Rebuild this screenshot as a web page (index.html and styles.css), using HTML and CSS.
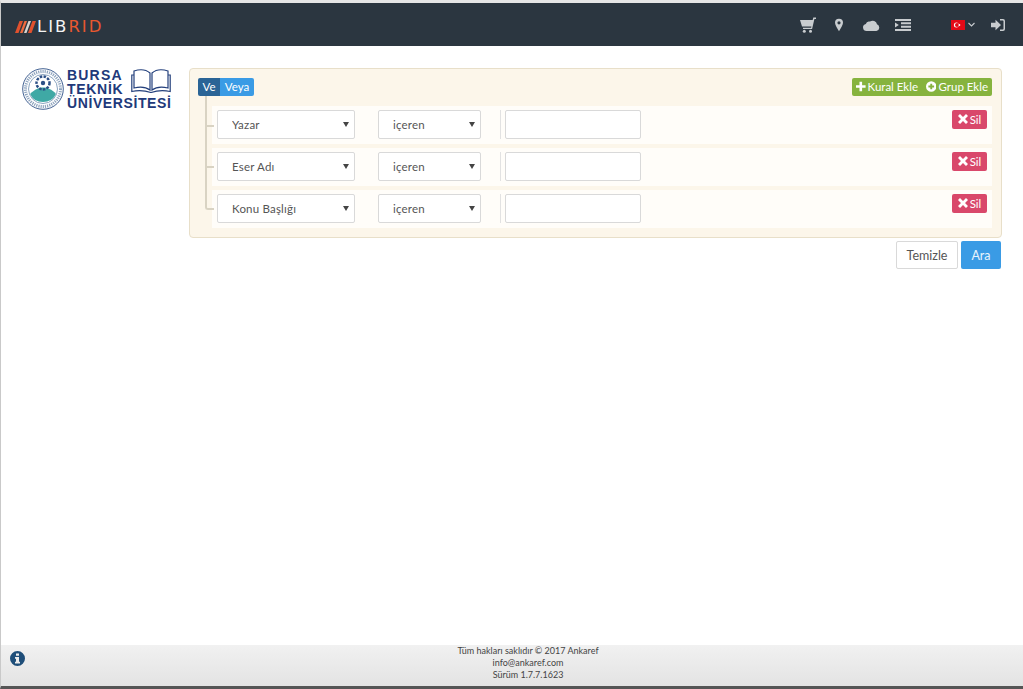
FILE: index.html
```html
<!DOCTYPE html>
<html lang="tr">
<head>
    <meta charset="UTF-8">
    <meta name="viewport" content="width=device-width, initial-scale=1.0">
    <title>Libris - Arama</title>
    <link rel="stylesheet" href="styles.css">
</head>
<body>
    <header class="navbar">
        <div class="brand">
            <svg class="brand-mark" width="21" height="12" viewBox="0 0 21 12">
                <path d="M4.500 0H8L3.500 12H0z" fill="#e0512e"/>
                <path d="M9.500 0H12L7.500 12H5z" fill="#ee6a3f"/>
                <path d="M13.500 0H16l-4.500 12H9z" fill="#d8d4cf"/>
                <path d="M17.500 0H21l-4.500 12H13z" fill="#e0512e"/>
            </svg>
            <span class="brand-lib">LIB</span><span class="brand-rid">RID</span>
        </div>
        <nav class="nav-icons">
            <svg class="nav-icon cart" width="16" height="16" viewBox="0 0 16 16"><path d="M0 3h12.700l.6-2.400H16v1.300h-1.600l-2.300 10H3v-1.200h8.100l.3-1.300H2z"/><circle cx="4.300" cy="14.300" r="1.500"/><circle cx="10.500" cy="14.300" r="1.500"/></svg>
            <svg class="nav-icon pin" width="8" height="14" viewBox="0 0 9 14"><path fill-rule="evenodd" d="M4.500 0A4.500 4.500 0 0 1 9 4.500c0 2.400-2.600 6.600-4.500 9.500C2.600 11.100 0 6.900 0 4.500A4.500 4.500 0 0 1 4.500 0zm0 2.700a1.800 1.800 0 1 0 0 3.600 1.800 1.800 0 0 0 0-3.600z"/></svg>
            <svg class="nav-icon cloud" width="17" height="12" viewBox="0 0 17 12"><path d="M3.600 12a3.600 3.600 0 0 1-.8-7.100A3.400 3.400 0 0 1 7 2.600 4.400 4.400 0 0 1 14 5.300 3.500 3.500 0 0 1 13.400 12z"/></svg>
            <svg class="nav-icon indent" width="16" height="12" viewBox="0 0 16 12"><path d="M0 0h16v2H0zM6 3.300h10v2H6zM6 6.700h10v2H6zM0 10h16v2H0zM0 3.500L3.800 6 0 8.500z"/></svg>
            <div class="lang">
                <svg width="14" height="10" viewBox="0 0 14 10"><rect width="14" height="10" fill="#e30a17"/><circle cx="5.400" cy="5" r="2.500" fill="#fff"/><circle cx="6" cy="5" r="2" fill="#e30a17"/><circle cx="8.400" cy="5" r="0.900" fill="#fff"/></svg>
                <svg class="chevron" width="7" height="5" viewBox="0 0 7 5"><path d="M.5 1l3 3 3-3" fill="none" stroke="#c8cccf" stroke-width="1.100"/></svg>
            </div>
            <svg class="nav-icon signin" width="14" height="12" viewBox="0 0 14 12"><path d="M0 3.800h4.500V.8L10 6l-5.500 5.200v-3H0zM9 0h3a2 2 0 0 1 2 2v8a2 2 0 0 1-2 2H9v-1.500h2.800c.4 0 .7-.3.700-.7V2.200c0-.4-.3-.7-.7-.7H9z"/></svg>
        </nav>
    </header>

    <main class="page">
        <aside class="sidebar">
            <div class="uni-logo">
                <svg class="uni-seal" width="42" height="42" viewBox="0 0 42 42">
                    <circle cx="21" cy="21" r="20.300" fill="#fff" stroke="#2c4f86" stroke-width="0.900"/>
                    <circle cx="21" cy="21" r="14.500" fill="#fff" stroke="#6d8db0" stroke-width="0.800"/>
                    <circle cx="21" cy="21" r="17.500" fill="none" stroke="#8da3bd" stroke-width="3" stroke-dasharray="1.200 1"/>
                    <path d="M8 26c5-5 9-6.500 13-6.500S30 21 34 26a14.500 14.500 0 0 1-26 0z" fill="#3fa9a5"/>
                    <circle cx="21" cy="15" r="6.500" fill="none" stroke="#2c4f86" stroke-width="2.500" stroke-dasharray="2.500 1.300"/>
                    <circle cx="21" cy="15" r="2.200" fill="#2c4f86"/>
                </svg>
                <div class="uni-name">
                    <span class="uni-line uni-bursa">BURSA</span>
                    <svg class="uni-book" width="40" height="25" viewBox="0 0 40 25">
                        <path d="M3 3v17c6-1.500 12-1 16 2V5C15 1.500 9 1 3 3zM37 3v17c-6-1.500-12-1-16 2V5c4-3.500 10-4 16-2z" fill="#fff" stroke="#24407c" stroke-width="1.200"/>
                        <path d="M3 7H.8v16.500c7-1.500 13-1 19.200 1 6-2 12-2.500 19.200-1V7H37" fill="none" stroke="#24407c" stroke-width="1.200"/>
                    </svg>
                    <span class="uni-line uni-teknik">TEKNİK</span>
                    <span class="uni-line uni-wide">ÜNİVERSİTESİ</span>
                </div>
            </div>
        </aside>

        <section class="search">
            <div class="builder">
                <div class="group-head">
                    <div class="btn-pair">
                        <button class="btn btn-dark">Ve</button>
                        <button class="btn btn-blue">Veya</button>
                    </div>
                    <div class="btn-pair">
                        <button class="btn btn-green">
                            <svg class="btn-icon" width="11" height="11" viewBox="0 0 11 11"><path d="M4 0h3v4h4v3H7v4H4V7H0V4h4z"/></svg>Kural Ekle
                        </button>
                        <button class="btn btn-green">
                            <svg class="btn-icon" width="11" height="11" viewBox="0 0 11 11"><path fill-rule="evenodd" d="M5.500 0a5.500 5.500 0 1 1 0 11 5.500 5.500 0 0 1 0-11zM4.500 2.500v2h-2v2h2v2h2v-2h2v-2h-2v-2z"/></svg>Grup Ekle
                        </button>
                    </div>
                </div>

                <div class="rules">
                    <div class="rule">
                        <div class="select-wrap field-wide"><select><option>Yazar</option></select></div>
                        <div class="select-wrap field-op"><select><option>içeren</option></select></div>
                        <div class="divider"></div>
                        <input class="value" type="text">
                        <button class="btn btn-red">
                            <svg class="btn-icon" width="10" height="10" viewBox="0 0 10 10"><path d="M2 0l3 3 3-3 2 2-3 3 3 3-2 2-3-3-3 3-2-2 3-3-3-3z"/></svg>Sil
                        </button>
                    </div>
                    <div class="rule">
                        <div class="select-wrap field-wide"><select><option>Eser Adı</option></select></div>
                        <div class="select-wrap field-op"><select><option>içeren</option></select></div>
                        <div class="divider"></div>
                        <input class="value" type="text">
                        <button class="btn btn-red">
                            <svg class="btn-icon" width="10" height="10" viewBox="0 0 10 10"><path d="M2 0l3 3 3-3 2 2-3 3 3 3-2 2-3-3-3 3-2-2 3-3-3-3z"/></svg>Sil
                        </button>
                    </div>
                    <div class="rule">
                        <div class="select-wrap field-wide"><select><option>Konu Başlığı</option></select></div>
                        <div class="select-wrap field-op"><select><option>içeren</option></select></div>
                        <div class="divider"></div>
                        <input class="value" type="text">
                        <button class="btn btn-red">
                            <svg class="btn-icon" width="10" height="10" viewBox="0 0 10 10"><path d="M2 0l3 3 3-3 2 2-3 3 3 3-2 2-3-3-3 3-2-2 3-3-3-3z"/></svg>Sil
                        </button>
                    </div>
                </div>
            </div>

            <div class="actions">
                <button class="btn-lg btn-clear">Temizle</button>
                <button class="btn-lg btn-search">Ara</button>
            </div>
        </section>
    </main>

    <footer class="footer">
        <svg class="info-icon" width="15" height="15" viewBox="0 0 15 15"><path fill-rule="evenodd" d="M7.500 0a7.500 7.500 0 1 1 0 15 7.500 7.500 0 0 1 0-15zM6 2.500v2.300h3V2.500zM5 6v1.700h1v3H5v1.800h5v-1.800H9V6z"/></svg>
        <div class="footer-text">
            <div>Tüm hakları saklıdır © 2017 Ankaref</div>
            <div>info@ankaref.com</div>
            <div>Sürüm 1.7.7.1623</div>
        </div>
    </footer>
</body>
</html>
```

FILE: styles.css
```css
* {
    margin: 0;
    padding: 0;
    box-sizing: border-box;
}

html, body {
    height: 100%;
    overflow: hidden;
}

body {
    font-family: 'Lato', 'Open Sans', sans-serif;
    background: #fff;
    color: #555;
    display: flex;
    flex-direction: column;
    border-left: 1px solid #c9c9c9;
    border-top: 3px solid #e6e6e6;
    border-bottom: 3px solid #555;
}

button, select, input {
    font-family: inherit;
}

/* top bar */
.navbar {
    height: 43px;
    flex: none;
    background: #2b3640;
    display: flex;
    align-items: center;
    justify-content: space-between;
    padding: 0 18px 0 14px;
}

.brand {
    display: flex;
    align-items: center;
    padding-top: 5px;
    font-family: 'DejaVu Sans', sans-serif;
    font-size: 16.5px;
    letter-spacing: 2px;
    line-height: 1;
}

.brand-mark {
    margin-right: 1px;
}

.brand-lib {
    color: #f4f4f4;
}

.brand-rid {
    color: #e8582f;
}

.nav-icons {
    display: flex;
    align-items: center;
}

.nav-icon {
    fill: #c8cccf;
    display: block;
}

.cart {
    margin-right: 19px;
}

.pin {
    margin-right: 20px;
}

.cloud {
    margin-right: 15px;
}

.indent {
    margin-right: 40px;
}

.lang {
    display: flex;
    align-items: center;
    gap: 3px;
    margin-right: 16px;
}

/* content */
.page {
    flex: 1;
    display: flex;
    padding: 22px 21px 0 21px;
}

.sidebar {
    width: 167px;
    flex: none;
}

.uni-logo {
    display: flex;
    gap: 3px;
}

.uni-seal {
    flex: none;
}

.uni-name {
    display: grid;
    grid-template-columns: 64px 40px;
    color: #21397a;
    font-family: 'Liberation Sans', sans-serif;
    font-weight: 700;
    font-size: 14px;
    line-height: 14px;
}

.uni-bursa {
    letter-spacing: 1.2px;
}

.uni-teknik {
    letter-spacing: 0.7px;
}

.uni-book {
    grid-row: 1 / span 2;
    grid-column: 2;
}

.uni-wide {
    grid-column: 1 / span 2;
    letter-spacing: 0.6px;
    white-space: nowrap;
}

.search {
    flex: 1;
}

.builder {
    background: #fcf6ea;
    border: 1px solid #e8dfc9;
    border-radius: 4px;
    padding: 9px 9px 8px 8px;
    height: 170px;
}

.group-head {
    display: flex;
    justify-content: space-between;
    height: 18px;
}

.btn-pair {
    display: flex;
}

.btn {
    border: none;
    color: #fff;
    font-size: 11.5px;
    height: 18px;
    padding: 0 4px 1px;
    display: inline-flex;
    align-items: center;
    white-space: nowrap;
}

.btn-icon {
    fill: #fff;
    margin-right: 2px;
}

.btn-dark {
    background: #2a6496;
    border-radius: 2px 0 0 2px;
    width: 22px;
    justify-content: center;
}

.btn-blue {
    background: #3a9be5;
    border-radius: 0 2px 2px 0;
    width: 34px;
    justify-content: center;
}

.btn-green {
    background: #86b33e;
    width: 70px;
    justify-content: center;
}

.btn-green:first-child {
    border-radius: 2px 0 0 2px;
}

.btn-green:last-child {
    border-radius: 0 2px 2px 0;
}

.btn-red {
    background: #d9486b;
    border-radius: 2px;
    margin-left: auto;
    width: 35px;
    height: 19px;
    justify-content: center;
    align-self: flex-start;
}

/* rows with tree lines */
.rules {
    display: flex;
    flex-direction: column;
    gap: 4px;
    margin-top: 10px;
    margin-left: 14px;
}

.rule {
    height: 38px;
    background: #fffdf9;
    display: flex;
    align-items: flex-start;
    padding: 4px 5px;
    position: relative;
}

.rule::before {
    content: "";
    position: absolute;
    left: -7px;
    top: -10px;
    width: 7px;
    height: 29px;
    border-left: 2px solid #d9d3c3;
    border-bottom: 2px solid #d9d3c3;
}

.rule + .rule::before {
    top: -25px;
    height: 43px;
}

.rule:last-child::before {
    border-radius: 0 0 0 3px;
}

.select-wrap {
    position: relative;
    height: 29px;
}

.select-wrap::after {
    content: "";
    position: absolute;
    right: 6px;
    top: 12px;
    border-left: 3px solid transparent;
    border-right: 3px solid transparent;
    border-top: 5px solid #444;
    pointer-events: none;
}

.select-wrap select {
    appearance: none;
    width: 100%;
    height: 100%;
    background: #fff;
    border: 1px solid #d9d9d9;
    border-radius: 2px;
    padding-left: 14px;
    font-size: 11.5px;
    letter-spacing: 0.2px;
    color: #555;
}

.field-wide {
    width: 138px;
    margin-right: 23px;
}

.field-op {
    width: 103px;
    margin-right: 19px;
}

.divider {
    width: 1px;
    height: 29px;
    background: #e2e2e2;
    margin-right: 4px;
}

.value {
    width: 136px;
    height: 29px;
    background: #fff;
    border: 1px solid #d9d9d9;
    border-radius: 2px;
}

.actions {
    display: flex;
    justify-content: flex-end;
    gap: 3px;
    margin-top: 3px;
    padding-right: 1px;
}

.btn-lg {
    height: 28px;
    font-size: 12.5px;
    border-radius: 2px;
}

.btn-clear {
    width: 62px;
    background: #fff;
    border: 1px solid #d9d9d9;
    color: #555;
}

.btn-search {
    width: 40px;
    background: #3a9be5;
    border: none;
    color: #e8f3fc;
}

/* footer */
.footer {
    height: 41px;
    flex: none;
    background: linear-gradient(#f1f1f1, #e3e3e3);
    position: relative;
    padding-left: 32px;
    text-align: center;
    font-size: 9px;
    line-height: 12px;
    color: #444;
}

.info-icon {
    position: absolute;
    left: 9px;
    top: 6px;
    fill: #1f4e79;
}
```
